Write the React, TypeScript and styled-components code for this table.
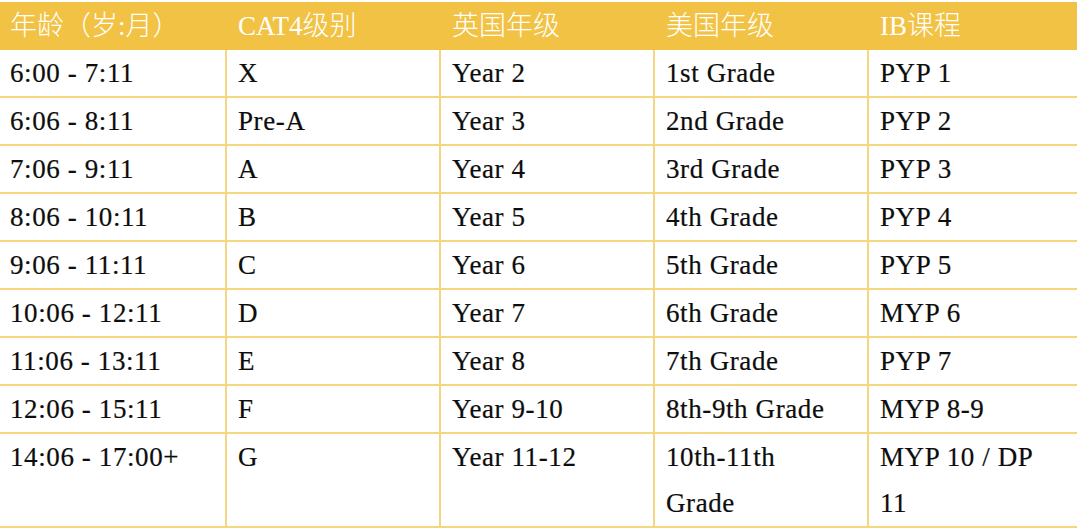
import React from 'react'
import styled, { createGlobalStyle } from 'styled-components'

const GlobalStyle = createGlobalStyle`
  html, body {
    margin: 0;
    padding: 0;
    background: #ffffff;
  }
`

const yellow = {
  head: '#F1C244',
  line: '#F5D67E',
}

const COLUMNS = ['年龄（岁:月）', 'CAT4级别', '英国年级', '美国年级', 'IB课程']

const ROWS: string[][] = [
  ['6:00 - 7:11', 'X', 'Year 2', '1st Grade', 'PYP 1'],
  ['6:06 - 8:11', 'Pre-A', 'Year 3', '2nd Grade', 'PYP 2'],
  ['7:06 - 9:11', 'A', 'Year 4', '3rd Grade', 'PYP 3'],
  ['8:06 - 10:11', 'B', 'Year 5', '4th Grade', 'PYP 4'],
  ['9:06 - 11:11', 'C', 'Year 6', '5th Grade', 'PYP 5'],
  ['10:06 - 12:11', 'D', 'Year 7', '6th Grade', 'MYP 6'],
  ['11:06 - 13:11', 'E', 'Year 8', '7th Grade', 'PYP 7'],
  ['12:06 - 15:11', 'F', 'Year 9-10', '8th-9th Grade', 'MYP 8-9'],
  ['14:06 - 17:00+', 'G', 'Year 11-12', '10th-11th Grade', 'MYP 10 / DP 11'],
]

const Page = styled.div`
  padding-top: 2px;
  width: 1080px;
`

const Grid = styled.div`
  display: grid;
  grid-template-columns: 227px 214px 214px 214px 208px;
  width: 1077px;
`

const HeadCell = styled.div`
  background: ${yellow.head};
  color: #ffffff;
  height: 48px;
  line-height: 48px;
  padding: 0 11px;
  font-family: 'Liberation Serif', 'Noto Sans CJK SC', serif;
  font-size: 27px;
  font-weight: 300;
  white-space: nowrap;

  &:first-child {
    padding-left: 10px;
  }
`

const Cell = styled.div<{ $last: boolean }>`
  box-sizing: border-box;
  min-height: 48px;
  padding: 0 20px 0 11px;
  border-bottom: 2px solid ${yellow.line};
  border-right: ${(p) => (p.$last ? 'none' : `2px solid ${yellow.line}`)};
  color: #0d0d0d;
  font-family: 'Liberation Serif', 'Times New Roman', serif;
  font-size: 27px;
  letter-spacing: 0.6px;
  line-height: 46px;
  -webkit-text-stroke: 0.2px #0d0d0d;

  &:nth-child(5n + 1) {
    padding-left: 10px;
  }
`

export default function App() {
  return (
    <Page>
      <GlobalStyle />
      <Grid>
        {COLUMNS.map((c) => (
          <HeadCell key={c}>{c}</HeadCell>
        ))}
        {ROWS.map((row) =>
          row.map((v, i) => (
            <Cell key={row[0] + i} $last={i === row.length - 1}>
              {v}
            </Cell>
          ))
        )}
      </Grid>
    </Page>
  )
}
